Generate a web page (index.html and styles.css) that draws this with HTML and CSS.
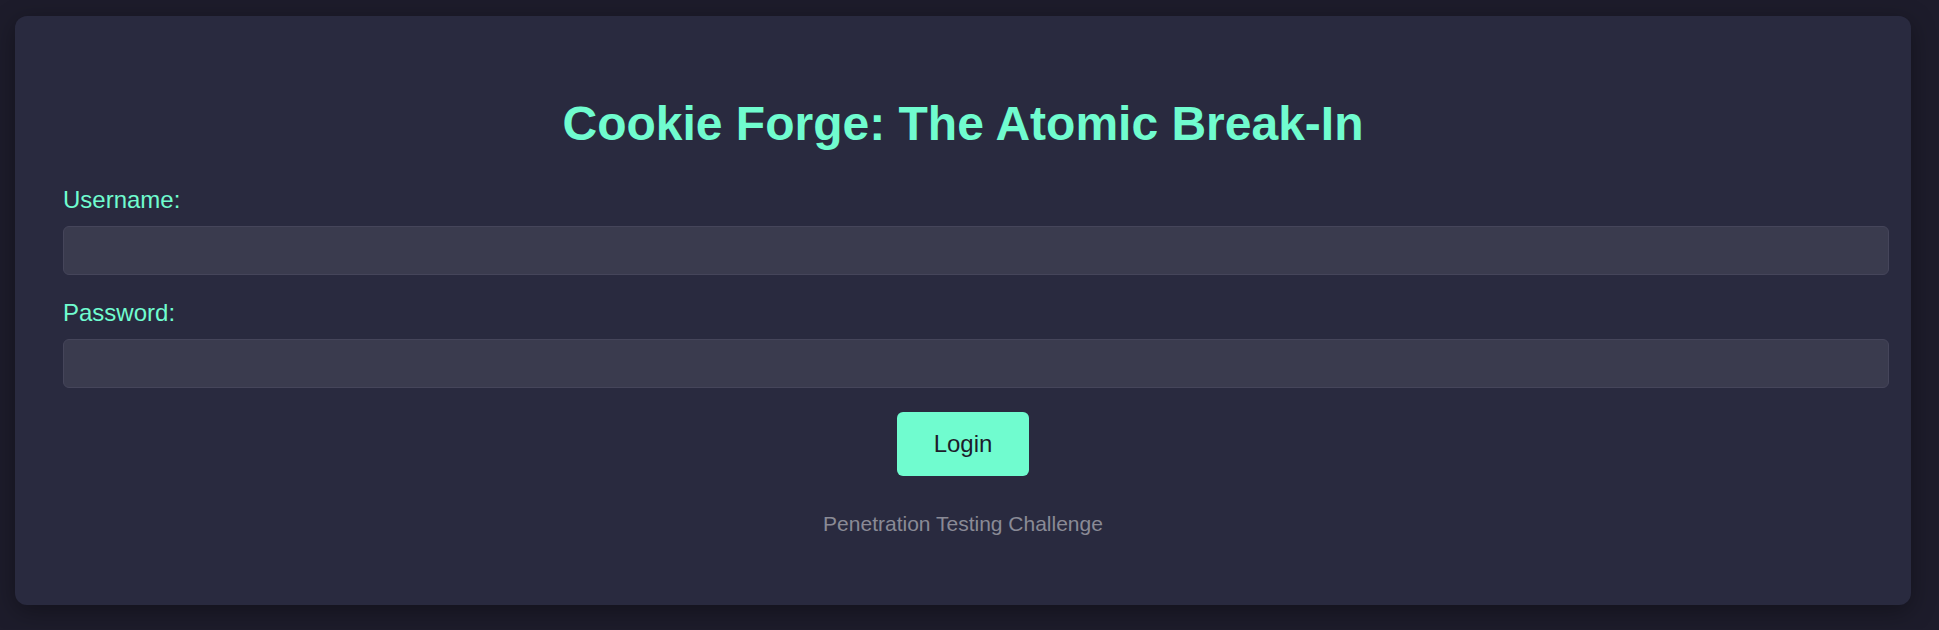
FILE: index.html
```html
<!DOCTYPE html>
<html>
<head>
<meta charset="utf-8">
<title>Cookie Forge</title>
<link rel="stylesheet" href="styles.css">
</head>
<body>
<div class="card">
  <h1 class="title">Cookie Forge: The Atomic Break-In</h1>
  <form class="form">
    <div class="group">
      <label class="label" for="u">Username:</label>
      <input class="field" id="u" type="text">
    </div>
    <div class="group">
      <label class="label" for="p">Password:</label>
      <input class="field" id="p" type="password">
    </div>
    <div class="actions">
      <button class="btn" type="button">Login</button>
    </div>
  </form>
  <p class="footer">Penetration Testing Challenge</p>
</div>
</body>
</html>
```
FILE: styles.css
```css
html, body {
  margin: 0;
  padding: 0;
  background: #1d1c2b;
  font-family: "Liberation Sans", Arial, sans-serif;
}
body {
  padding: 16px 28px 24px 15px;
}
.card {
  background: #292a3f;
  border-radius: 12px;
  padding: 48px;
  box-shadow: 0 6px 24px rgba(0, 0, 0, 0.35);
}
.title {
  margin: 32px 0 35px;
  text-align: center;
  font-size: 48px;
  font-weight: bold;
  color: #70fccf;
}
.form {
  margin: 0;
}
.group {
  margin-bottom: 24px;
}
.label {
  display: block;
  font-size: 24px;
  color: #70fccf;
  margin-bottom: 12px;
}
.field {
  display: block;
  width: 100%;
  height: 23px;
  padding: 12px;
  border: 1px solid #45455a;
  border-radius: 6px;
  background: #3a3b4e;
  color: #e0e0e0;
  font-size: 20px;
  font-family: "Liberation Sans", Arial, sans-serif;
  outline: none;
}
.actions {
  display: flex;
  justify-content: center;
}
.btn {
  background: #70fccf;
  color: #1d1c2b;
  border: none;
  border-radius: 6px;
  padding: 18px 37px;
  font-size: 24px;
  font-family: "Liberation Sans", Arial, sans-serif;
  line-height: normal;
}
.footer {
  margin: 36px 0 21px;
  text-align: center;
  font-size: 21px;
  color: #8a8a96;
}
```
